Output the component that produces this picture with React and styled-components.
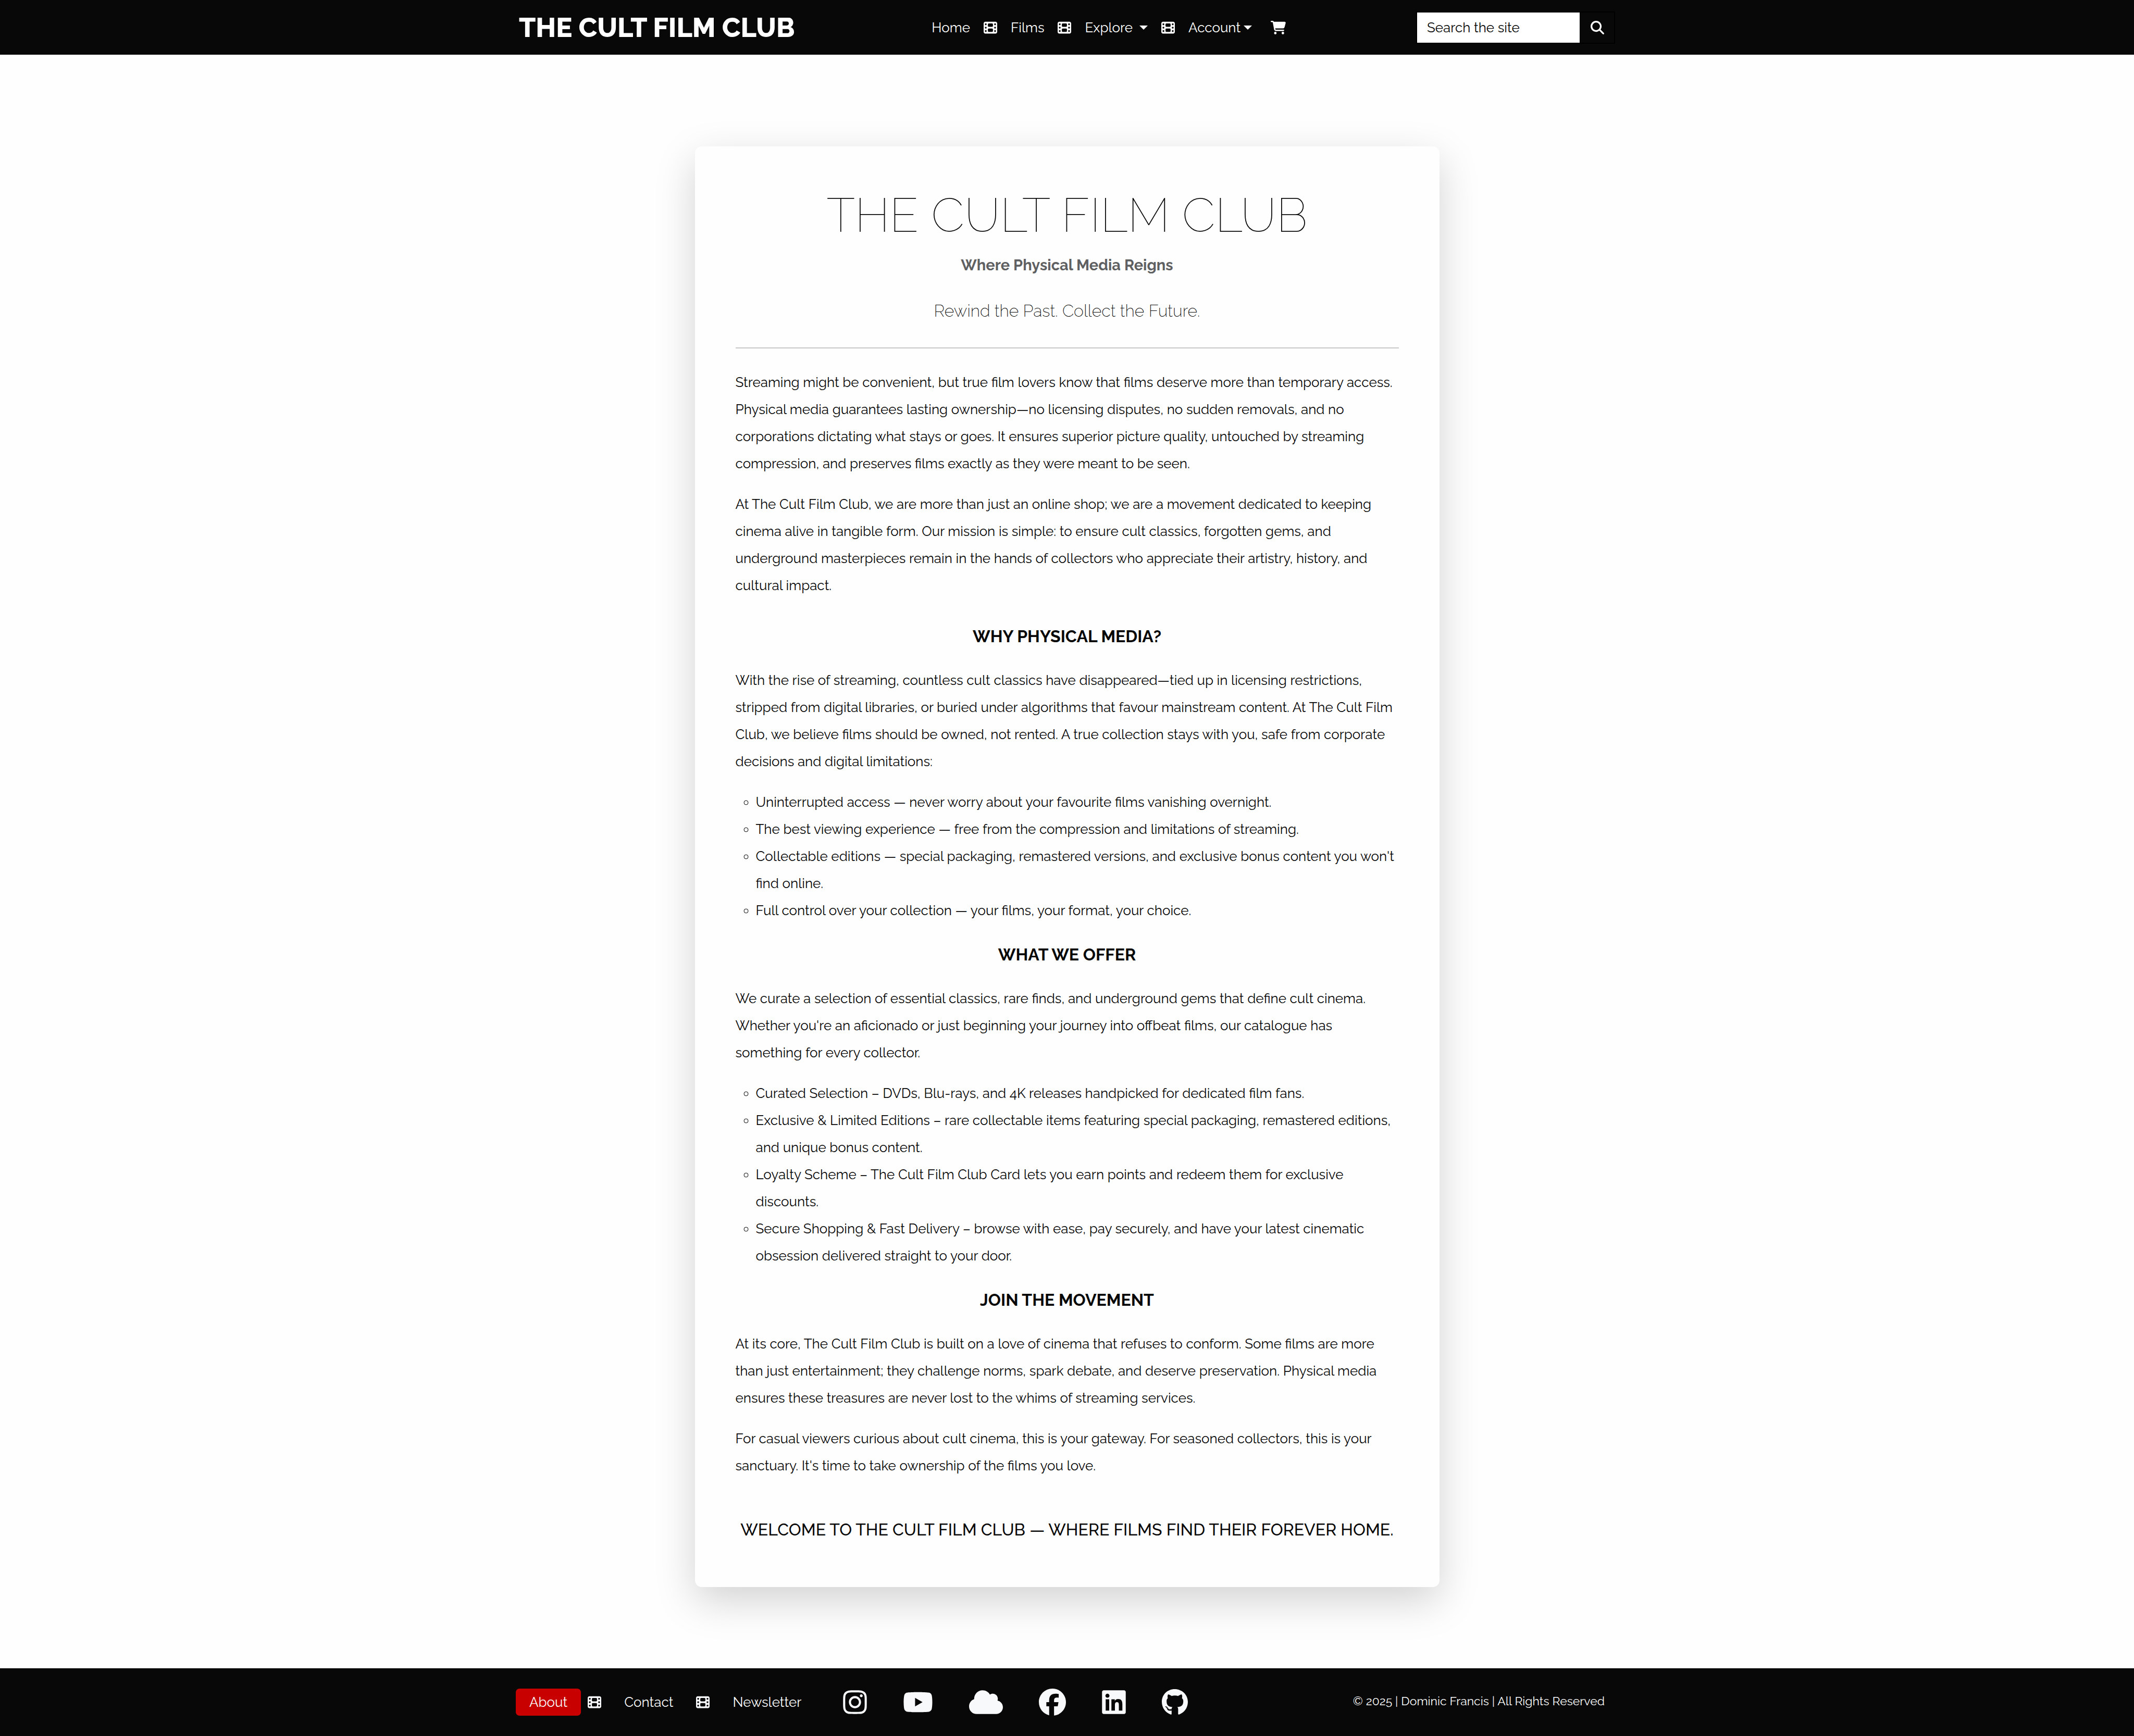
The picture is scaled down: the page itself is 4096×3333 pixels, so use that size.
import React from "react";
import styled, { createGlobalStyle } from "styled-components";
import {
  FaCartShopping,
  FaCloud,
  FaFacebook,
  FaFilm,
  FaGithub,
  FaInstagram,
  FaLinkedin,
  FaMagnifyingGlass,
  FaYoutube,
} from "react-icons/fa6";

const ink = "#080808";
const paper = "#fefefe";
const light = "#f8f9fa";

const GlobalStyle = createGlobalStyle`
  *, *::before, *::after { box-sizing: border-box; }
  body {
    margin: 0;
    background: ${paper};
    color: ${ink};
    font-family: Raleway, Lato, sans-serif;
    font-size: 26px;
    font-weight: 400;
    line-height: 52px;
  }
  h1, h2, p, ul { margin: 0; padding: 0; }
  button, input { font: inherit; color: inherit; }
`;

const Page = styled.div`
  display: flex;
  flex-direction: column;
  min-height: 100vh;
`;

const Header = styled.header`
  display: flex;
  justify-content: center;
  background: ${ink};
  color: #fff;
`;

const HeaderInner = styled.div`
  display: flex;
  align-items: center;
  justify-content: space-between;
  width: 100%;
  max-width: 2142px;
  min-height: 105px;
  padding: 0 19px;
`;

const Brand = styled.a`
  color: inherit;
  font-size: 52px;
  font-weight: 800;
  text-decoration: none;
  white-space: nowrap;
`;

const MainNav = styled.nav`
  display: flex;
  align-items: center;
  gap: 26px;
  padding-left: 13px;
`;

const NavLink = styled.a`
  color: inherit;
  text-decoration: none;
`;

const NavToggle = styled.button`
  display: flex;
  align-items: center;
  gap: ${(p) => (p.$wide ? 13 : 6)}px;
  padding: 0;
  border: 0;
  background: none;
  cursor: pointer;

  &::after {
    content: "";
    border: 8px solid transparent;
    border-top-color: currentColor;
    border-bottom: 0;
  }
`;

const CartLink = styled.a`
  display: flex;
  margin-left: 10px;
  color: inherit;

  svg {
    width: 29px;
    height: 26px;
  }
`;

const SearchForm = styled.form`
  display: flex;
  height: 62px;
`;

const SearchInput = styled.input`
  width: 316px;
  padding: 0 19px;
  border: 2px solid #000;
  border-radius: 0;
  background: #fff;
  color: ${ink};
  outline: none;

  &::placeholder {
    color: ${ink};
    opacity: 1;
  }
`;

const SearchButton = styled.button`
  display: flex;
  align-items: center;
  justify-content: center;
  width: 66px;
  padding: 0;
  border: 2px solid #000;
  border-left: 0;
  background: ${ink};
  color: #fff;
  cursor: pointer;
`;

const Main = styled.main`
  display: flex;
  flex: 1;
  justify-content: center;
  align-items: flex-start;
  padding: 176px 19px 156px;
`;

const Card = styled.article`
  width: 100%;
  max-width: 1429px;
  padding: 78px;
  border-radius: 13px;
  background: ${paper};
  box-shadow: 0 26px 78px rgba(0, 0, 0, 0.175);
`;

const Masthead = styled.header`
  display: flex;
  flex-direction: column;
  padding-bottom: 38px;
  border-bottom: 2px solid #c8c8c8;
  text-align: center;
`;

const Title = styled.h1`
  font-size: 91px;
  font-weight: 100;
  line-height: 108px;
`;

const Subtitle = styled.p`
  margin-top: 13px;
  color: #5f6062;
  font-size: 29px;
  font-weight: 700;
  line-height: 58px;
`;

const Tagline = styled.p`
  margin-top: 26px;
  font-size: 32px;
  font-weight: 200;
  line-height: 65px;
`;

const Section = styled.section`
  display: flex;
  flex-direction: column;
  gap: 26px;
  margin-top: ${(p) => p.$space}px;
`;

const Heading = styled.h2`
  font-size: 32px;
  font-weight: 700;
  line-height: 65px;
  text-align: center;
`;

const Points = styled.ul`
  padding-left: 39px;
  list-style: circle;
`;

const Closing = styled.p`
  margin-top: 64px;
  font-size: 32px;
  font-weight: 500;
  line-height: 65px;
  text-align: center;
`;

const Footer = styled.footer`
  display: flex;
  justify-content: center;
  background: ${ink};
  color: ${light};
`;

const FooterInner = styled.div`
  display: flex;
  align-items: center;
  gap: 54px;
  width: 100%;
  max-width: 2142px;
  min-height: 130px;
  padding: 0 39px 0 13px;
`;

const FooterNav = styled.nav`
  display: flex;
  align-items: center;
  gap: 18px;
`;

const FooterLink = styled.a`
  margin-right: ${(p) => (p.$active ? -5 : 0)}px;
  padding: 0 26px;
  border-radius: 7px;
  background: ${(p) => (p.$active ? "#c80000" : "transparent")};
  color: inherit;
  text-decoration: none;
`;

const Social = styled.div`
  display: flex;
  align-items: center;
  gap: 69px;
`;

const SocialLink = styled.a`
  display: flex;
  color: inherit;

  svg {
    width: ${(p) => p.$width}px;
    height: 52px;
  }
`;

const Copyright = styled.p`
  margin-left: auto;
  padding-bottom: 4px;
  font-size: 23px;
  white-space: nowrap;
`;

const socialLinks = [
  { name: "Instagram", Icon: FaInstagram, width: 46 },
  { name: "YouTube", Icon: FaYoutube, width: 58 },
  { name: "Bluesky", Icon: FaCloud, width: 65 },
  { name: "Facebook", Icon: FaFacebook, width: 52 },
  { name: "LinkedIn", Icon: FaLinkedin, width: 46 },
  { name: "GitHub", Icon: FaGithub, width: 50 },
];

const whyPoints = [
  "Uninterrupted access — never worry about your favourite films vanishing overnight.",
  "The best viewing experience — free from the compression and limitations of streaming.",
  "Collectable editions — special packaging, remastered versions, and exclusive bonus content you won't find online.",
  "Full control over your collection — your films, your format, your choice.",
];

const offerPoints = [
  "Curated Selection – DVDs, Blu-rays, and 4K releases handpicked for dedicated film fans.",
  "Exclusive & Limited Editions – rare collectable items featuring special packaging, remastered editions, and unique bonus content.",
  "Loyalty Scheme – The Cult Film Club Card lets you earn points and redeem them for exclusive discounts.",
  "Secure Shopping & Fast Delivery – browse with ease, pay securely, and have your latest cinematic obsession delivered straight to your door.",
];

function PointList({ items }) {
  return (
    <Points>
      {items.map((item) => (
        <li key={item}>{item}</li>
      ))}
    </Points>
  );
}

export default function App() {
  return (
    <Page>
      <GlobalStyle />
      <Header>
        <HeaderInner>
          <Brand href="#">THE CULT FILM CLUB</Brand>
          <MainNav aria-label="Main">
            <NavLink href="#home">Home</NavLink>
            <FaFilm aria-hidden="true" />
            <NavLink href="#films">Films</NavLink>
            <FaFilm aria-hidden="true" />
            <NavToggle type="button" $wide>Explore</NavToggle>
            <FaFilm aria-hidden="true" />
            <NavToggle type="button">Account</NavToggle>
            <CartLink href="#cart" aria-label="Cart">
              <FaCartShopping />
            </CartLink>
          </MainNav>
          <SearchForm role="search">
            <SearchInput type="text" placeholder="Search the site" aria-label="Search the site" />
            <SearchButton type="submit" aria-label="Search">
              <FaMagnifyingGlass />
            </SearchButton>
          </SearchForm>
        </HeaderInner>
      </Header>

      <Main>
        <Card>
          <Masthead>
            <Title>THE CULT FILM CLUB</Title>
            <Subtitle>Where Physical Media Reigns</Subtitle>
            <Tagline>Rewind the Past. Collect the Future.</Tagline>
          </Masthead>

          <Section $space={39}>
            <p>
              Streaming might be convenient, but true film lovers know that films deserve more than
              temporary access. Physical media guarantees lasting ownership—no licensing disputes,
              no sudden removals, and no corporations dictating what stays or goes. It ensures
              superior picture quality, untouched by streaming compression, and preserves films
              exactly as they were meant to be seen.
            </p>
            <p>
              At The Cult Film Club, we are more than just an online shop; we are a movement
              dedicated to keeping cinema alive in tangible form. Our mission is simple: to ensure
              cult classics, forgotten gems, and underground masterpieces remain in the hands of
              collectors who appreciate their artistry, history, and cultural impact.
            </p>
          </Section>

          <Section $space={39}>
            <Heading>WHY PHYSICAL MEDIA?</Heading>
            <p>
              With the rise of streaming, countless cult classics have disappeared—tied up in
              licensing restrictions, stripped from digital libraries, or buried under algorithms
              that favour mainstream content. At The Cult Film Club, we believe films should be
              owned, not rented. A true collection stays with you, safe from corporate decisions
              and digital limitations:
            </p>
            <PointList items={whyPoints} />
          </Section>

          <Section $space={26}>
            <Heading>WHAT WE OFFER</Heading>
            <p>
              We curate a selection of essential classics, rare finds, and underground gems that
              define cult cinema. Whether you're an aficionado or just beginning your journey into
              offbeat films, our catalogue has something for every collector.
            </p>
            <PointList items={offerPoints} />
          </Section>

          <Section $space={26}>
            <Heading>JOIN THE MOVEMENT</Heading>
            <p>
              At its core, The Cult Film Club is built on a love of cinema that refuses to conform.
              Some films are more than just entertainment; they challenge norms, spark debate, and
              deserve preservation. Physical media ensures these treasures are never lost to the
              whims of streaming services.
            </p>
            <p>
              For casual viewers curious about cult cinema, this is your gateway. For seasoned
              collectors, this is your sanctuary. It's time to take ownership of the films you
              love.
            </p>
          </Section>

          <Closing>WELCOME TO THE CULT FILM CLUB — WHERE FILMS FIND THEIR FOREVER HOME.</Closing>
        </Card>
      </Main>

      <Footer>
        <FooterInner>
          <FooterNav aria-label="Footer">
            <FooterLink href="#about" $active>About</FooterLink>
            <FaFilm aria-hidden="true" />
            <FooterLink href="#contact">Contact</FooterLink>
            <FaFilm aria-hidden="true" />
            <FooterLink href="#newsletter">Newsletter</FooterLink>
          </FooterNav>
          <Social>
            {socialLinks.map(({ name, Icon, width }) => (
              <SocialLink key={name} href={"#" + name.toLowerCase()} aria-label={name} $width={width}>
                <Icon />
              </SocialLink>
            ))}
          </Social>
          <Copyright>© 2025 | Dominic Francis | All Rights Reserved</Copyright>
        </FooterInner>
      </Footer>
    </Page>
  );
}
